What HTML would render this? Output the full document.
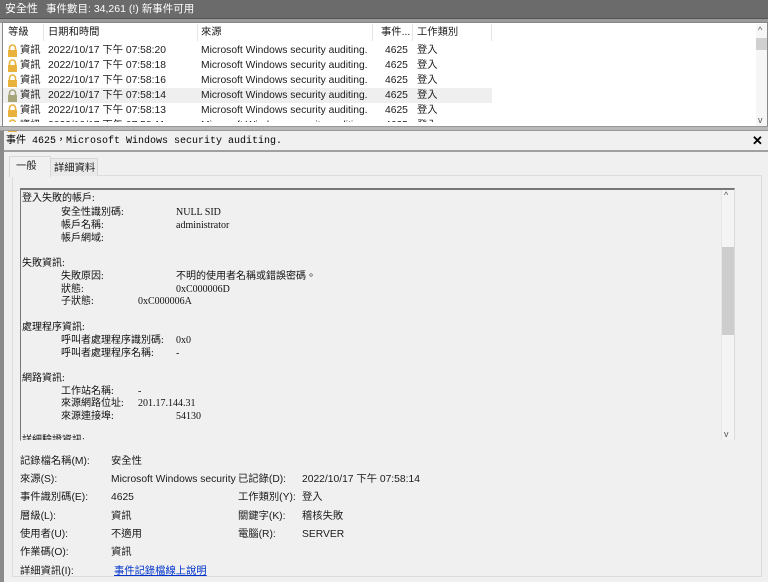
<!DOCTYPE html>
<html><head><meta charset="utf-8"><style>
*{margin:0;padding:0;box-sizing:border-box}
body{width:768px;height:582px;overflow:hidden;background:#f0f0f0;font-family:"Liberation Sans","Noto Sans CJK TC",sans-serif;font-size:10.3px;line-height:13px;color:#1a1a1a;position:relative}
.a{position:absolute;white-space:nowrap;line-height:13px}
.t{position:absolute;white-space:nowrap;font-family:"Liberation Serif","Noto Sans CJK TC",serif;font-size:10px;line-height:12px;color:#111}
.lock{position:absolute;width:11px;height:13px}
</style></head><body>
<div class="a" style="left:0;top:0;width:768px;height:19px;background:#6b6b6b;border-bottom:1px solid #555"></div>
<div class="a" style="left:5px;top:3px;color:#fff;font-size:11px">安全性</div>
<div class="a" style="left:46px;top:3px;color:#fff;font-size:10.5px">事件數目: 34,261 (!) 新事件可用</div>
<div class="a" style="left:0;top:19px;width:768px;height:4px;background:#9a9a9a"></div>
<div class="a" style="left:2px;top:22px;width:766px;height:105px;background:#fff;border:1px solid #888"></div>
<div class="a" style="left:3px;top:88px;width:489px;height:15px;background:#efefef"></div>
<div class="a" style="left:43px;top:24px;width:1px;height:17px;background:#e5e5e5"></div>
<div class="a" style="left:197px;top:24px;width:1px;height:17px;background:#e5e5e5"></div>
<div class="a" style="left:372px;top:24px;width:1px;height:17px;background:#e5e5e5"></div>
<div class="a" style="left:412px;top:24px;width:1px;height:17px;background:#e5e5e5"></div>
<div class="a" style="left:491px;top:24px;width:1px;height:17px;background:#e5e5e5"></div>
<div class="a" style="left:8px;top:26px">等級</div>
<div class="a" style="left:48px;top:26px">日期和時間</div>
<div class="a" style="left:201px;top:26px">來源</div>
<div class="a" style="left:381px;top:26px">事件...</div>
<div class="a" style="left:417px;top:26px">工作類別</div>
<div id="rows"></div>
<div class="a" style="left:756px;top:24px;width:11px;height:102px;background:#f6f6f6"></div>
<div class="a" style="left:756px;top:38px;width:11px;height:12px;background:#d0d0d0"></div>
<div class="a" style="left:758px;top:24px;font-size:9px;color:#555">^</div>
<div class="a" style="left:758px;top:114px;font-size:9px;color:#555">v</div>
<div class="a" style="left:0;top:126px;width:768px;height:5px;background:#b8b8b8;border-top:1px solid #999;border-bottom:1px solid #999"></div>
<div class="a" style="left:0;top:131px;width:4px;height:451px;background:#8a8a8a"></div>
<div class="a" style="left:6px;top:135px;font-family:'Liberation Mono','Noto Sans CJK TC',monospace;font-size:10px;color:#000">事件 4625，Microsoft Windows security auditing.</div>
<div class="a" style="left:752px;top:134px;font-size:13px;font-weight:bold;color:#000">✕</div>
<div class="a" style="left:4px;top:150px;width:764px;height:2px;background:#a0a0a0"></div>
<div class="a" style="left:12px;top:175px;width:750px;height:402px;border:1px solid #dcdcdc;background:#f0f0f0"></div>
<div class="a" style="left:50px;top:158px;width:48px;height:18px;border:1px solid #d8d8d8;border-bottom:none;background:#eaeaea"></div>
<div class="a" style="left:9px;top:156px;width:42px;height:21px;border:1px solid #d8d8d8;border-bottom:none;background:#f0f0f0"></div>
<div class="a" style="left:16px;top:160px">一般</div>
<div class="a" style="left:54px;top:162px">詳細資料</div>
<div class="a" style="left:20px;top:188px;width:715px;height:253px;border:1px solid #dadada;border-top:2px solid #777;border-left:1px solid #777;background:#f0f0f0;overflow:hidden">
<div style="position:absolute;left:700px;top:0;width:13px;height:251px;background:#f4f4f4;border-left:1px solid #e6e6e6"></div>
<div style="position:absolute;left:701px;top:57px;width:12px;height:88px;background:#cdcdcd"></div>
<div style="position:absolute;left:703px;top:-1px;font-size:9px;color:#555">^</div>
<div style="position:absolute;left:703px;top:238px;font-size:9px;color:#555">v</div>
</div>
<div id="txt"></div>
<div id="flds"></div>
<script>
var r='';var ys=[44,59,74,89,104,119];
for(var i=0;i<6;i++){var y=ys[i];var c=i==3?'#a7a57a':'#e8b23c';
r+='<svg class="lock" style="left:7px;top:'+(y)+'px" viewBox="0 0 11 13"><path d="M2.5 6V4a3 3 0 0 1 6 0v2" fill="none" stroke="'+c+'" stroke-width="1.6"/><rect x="1" y="6" width="9" height="7" fill="'+c+'"/></svg>';
r+='<div class="a" style="left:20px;top:'+y+'px">資訊</div><div class="a" style="left:48px;top:'+y+'px">2022/10/17 下午 07:58:'+['20','18','16','14','13','11'][i]+'</div><div class="a" style="left:201px;top:'+y+'px">Microsoft Windows security auditing.</div><div class="a" style="left:385px;top:'+y+'px">4625</div><div class="a" style="left:417px;top:'+y+'px">登入</div>';}
document.getElementById('rows').innerHTML=r+'<div class="a" style="left:3px;top:122px;width:752px;height:4px;background:#fff"></div>';
var L=[[22,191,'登入失敗的帳戶:'],[61,205,'安全性識別碼:'],[176,205,'NULL SID'],[61,218,'帳戶名稱:'],[176,218,'administrator'],[61,231,'帳戶網域:'],
[22,256,'失敗資訊:'],[61,269,'失敗原因:'],[176,269,'不明的使用者名稱或錯誤密碼。'],[61,282,'狀態:'],[176,282,'0xC000006D'],[61,294,'子狀態:'],[138,294,'0xC000006A'],
[22,320,'處理程序資訊:'],[61,333,'呼叫者處理程序識別碼:'],[176,333,'0x0'],[61,346,'呼叫者處理程序名稱:'],[176,346,'-'],
[22,371,'網路資訊:'],[61,384,'工作站名稱:'],[138,384,'-'],[61,396,'來源網路位址:'],[138,396,'201.17.144.31'],[61,409,'來源連接埠:'],[176,409,'54130'],[22,433,'詳細驗證資訊:']];
var s='';L.forEach(function(a){s+='<div class="t" style="left:'+a[0]+'px;top:'+(a[1]+2)+'px">'+a[2]+'</div>'});
document.getElementById('txt').innerHTML=s+'<div class="a" style="left:21px;top:440px;width:714px;height:8px;background:#f0f0f0"></div>';
var F=[[20,454,'記錄檔名稱(M):'],[111,454,'安全性'],[20,472,'來源(S):'],[111,472,'Microsoft Windows security'],[238,472,'已記錄(D):'],[302,472,'2022/10/17 下午 07:58:14'],
[20,490,'事件識別碼(E):'],[111,490,'4625'],[238,490,'工作類別(Y):'],[302,490,'登入'],[20,509,'層級(L):'],[111,509,'資訊'],[238,509,'關鍵字(K):'],[302,509,'稽核失敗'],
[20,527,'使用者(U):'],[111,527,'不適用'],[238,527,'電腦(R):'],[302,527,'SERVER'],[20,545,'作業碼(O):'],[111,545,'資訊'],[20,564,'詳細資訊(I):']];
s='';F.forEach(function(a){s+='<div class="a" style="left:'+a[0]+'px;top:'+(a[1]+1)+'px">'+a[2]+'</div>'});
s+='<div class="a" style="left:114px;top:565px;color:#0033cc;text-decoration:underline">事件記錄檔線上說明</div>';
document.getElementById('flds').innerHTML=s;
</script>
</body></html>
